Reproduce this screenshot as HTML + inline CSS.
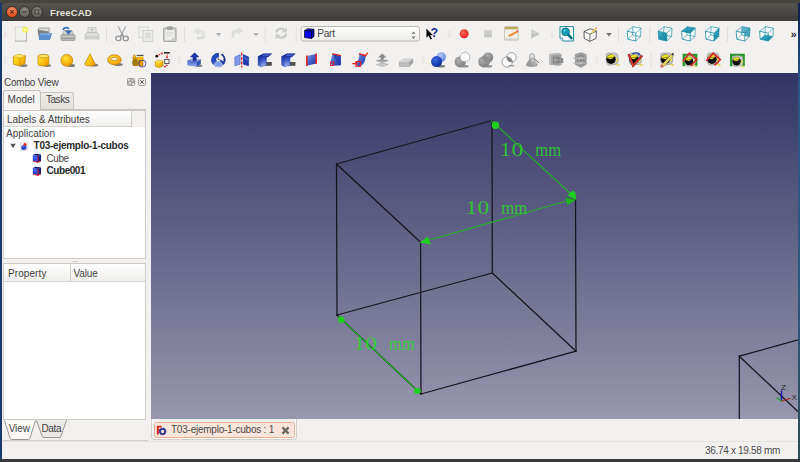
<!DOCTYPE html><html><head><meta charset="utf-8"><title>FreeCAD</title><style>
*{box-sizing:border-box;margin:0;padding:0}
html,body{width:800px;height:462px;overflow:hidden;background:#3e3d39}
body{position:relative;font-family:"Liberation Sans","DejaVu Sans",sans-serif;font-size:11px;color:#3c3c3c}
.abs{position:absolute}
#win{position:absolute;left:2px;top:12px;width:796px;height:447px;background:#f2f1f0}
#title{position:absolute;left:2px;top:3px;width:796px;height:18px;background:linear-gradient(#55544f,#3d3c38);border-radius:4px 4px 0 0}
#title .t{position:absolute;left:48px;top:2px;font-weight:bold;font-size:11.5px;color:#dfdbd2;letter-spacing:.2px}
.wb{position:absolute;top:3.1px;width:11.6px;height:11.6px;border-radius:50%;border:0.8px solid #33322e}
#view{position:absolute;left:151px;top:73px;width:647px;height:346px;background:linear-gradient(#333365,#9797ae)}
.t{white-space:nowrap;position:absolute}
.b{font-weight:bold}
</style></head><body><div class="abs" style="left:0;top:0;width:800px;height:3px;background:#45443f"></div><div class="abs" style="left:0;top:3px;width:2px;height:459px;background:#17396b"></div><div class="abs" style="left:798px;top:3px;width:2px;height:459px;background:linear-gradient(#0e1c4c,#2a5a8a 18%,#2f5578 70%,#2f4a52)"></div><div class="abs" style="left:0;top:459px;width:800px;height:3px;background:#3a3a3c"></div><div id="win"></div><div id="title"><div class="wb" style="left:4.3px;background:radial-gradient(circle at 50% 30%,#f79a72,#e2501f 70%)"></div><div class="wb" style="left:16.7px;background:radial-gradient(circle at 50% 30%,#8a8881,#65635d 75%)"></div><div class="wb" style="left:29.1px;background:radial-gradient(circle at 50% 30%,#8a8881,#65635d 75%)"></div><svg class="abs" style="left:0;top:0" width="50" height="18" viewBox="0 0 50 18"><path d="M8.3 7.1L11.7 10.5M11.7 7.1L8.3 10.5" stroke="#5e2a17" stroke-width="1.2"/><path d="M20.2 8.8H24.6" stroke="#46443f" stroke-width="1.3"/><rect x="32.8" y="6.8" width="4" height="4" fill="none" stroke="#46443f" stroke-width="1"/></svg><div class="t" style="left:48px;top:4.57px;font-size:9.6px;line-height:1;color:#e4e0d8;letter-spacing:0.103px;font-weight:bold;">FreeCAD</div></div><div id="view"></div><svg class="abs" style="left:0;top:0" width="800" height="462" viewBox="0 0 800 462"><defs><clipPath id="vc"><rect x="151" y="73" width="647" height="346"/></clipPath></defs><g clip-path="url(#vc)" stroke-linecap="round"><line x1="336.5" y1="164" x2="492" y2="120.5" stroke="#15151d" stroke-width="1.25"/><line x1="336.5" y1="164" x2="420.6" y2="242.3" stroke="#15151d" stroke-width="1.25"/><line x1="336.5" y1="164" x2="337" y2="315" stroke="#15151d" stroke-width="1.25"/><line x1="492" y1="120.5" x2="492.3" y2="273" stroke="#15151d" stroke-width="1.25"/><line x1="575.5" y1="197" x2="576" y2="351.2" stroke="#15151d" stroke-width="1.25"/><line x1="420.6" y1="242.3" x2="421" y2="394" stroke="#15151d" stroke-width="1.25"/><line x1="337" y1="315" x2="492.3" y2="273" stroke="#15151d" stroke-width="1.25"/><line x1="492.3" y1="273" x2="576" y2="351.2" stroke="#15151d" stroke-width="1.25"/><line x1="576" y1="351.2" x2="421" y2="394" stroke="#15151d" stroke-width="1.25"/><line x1="337" y1="315" x2="339" y2="317" stroke="#15151d" stroke-width="1.25"/><line x1="419.5" y1="392.6" x2="421" y2="394" stroke="#15151d" stroke-width="1.25"/><line x1="739.3" y1="356.2" x2="800" y2="339.4" stroke="#15151d" stroke-width="1.25"/><line x1="739.3" y1="356.2" x2="739.3" y2="420" stroke="#15151d" stroke-width="1.25"/><line x1="739.3" y1="356.2" x2="800" y2="413.5" stroke="#15151d" stroke-width="1.25"/><line x1="491.6" y1="120.8" x2="575.8" y2="198.5" stroke="#21b421" stroke-width="1.05"/><line x1="420.3" y1="242.6" x2="575.8" y2="198.5" stroke="#21b421" stroke-width="1.05"/><line x1="337" y1="315" x2="421" y2="394" stroke="#15151d" stroke-width="1.25"/><line x1="338.5" y1="316.4" x2="419.5" y2="392.6" stroke="#1fb41f" stroke-width="1.2"/><circle cx="495.5" cy="125.2" r="3.7" fill="#1fcf1f"/><circle cx="341.3" cy="319.8" r="3.2" fill="#1fcf1f"/><ellipse cx="417.4" cy="391" rx="3.4" ry="3" fill="#1fcf1f"/><polygon points="420,242.6 427.7,236.4 430.8,244.4" fill="#1fcf1f"/><polygon points="576.2,199.4 567.6,195.6 572.4,190.8 575.4,192.4" fill="#1fcf1f"/><polygon points="576.2,199.4 565.6,197.6 567.4,205.2" fill="#1cb81c"/><path d="M566 198L574 199.6" stroke="#158a15" stroke-width="0.8"/><text y="156.3" style="font-family:'Liberation Serif',serif;font-size:19px;fill:#2ad42a;fill-opacity:.88;stroke:none"><tspan x="499.6" textLength="23.6" lengthAdjust="spacingAndGlyphs">10</tspan> <tspan x="535.2" textLength="26" lengthAdjust="spacingAndGlyphs">mm</tspan></text><text y="213.9" style="font-family:'Liberation Serif',serif;font-size:19px;fill:#2ad42a;fill-opacity:.88;stroke:none"><tspan x="465.6" textLength="23.6" lengthAdjust="spacingAndGlyphs">10</tspan> <tspan x="501.20000000000005" textLength="26" lengthAdjust="spacingAndGlyphs">mm</tspan></text><text y="349.7" style="font-family:'Liberation Serif',serif;font-size:19px;fill:#2ad42a;fill-opacity:.88;stroke:none"><tspan x="353.4" textLength="23.6" lengthAdjust="spacingAndGlyphs">10</tspan> <tspan x="389.0" textLength="26" lengthAdjust="spacingAndGlyphs">mm</tspan></text><line x1="781.5" y1="401" x2="781.5" y2="391" stroke="#1818b0" stroke-width="1.5"/><line x1="781.5" y1="401" x2="790" y2="398.5" stroke="#b02020" stroke-width="1.3"/><line x1="781.5" y1="401" x2="777" y2="398" stroke="#20a020" stroke-width="1.3"/><text x="781" y="390" style="font-family:'Liberation Sans',sans-serif;font-size:8px;fill:#222">Z</text><text x="791.5" y="400" style="font-family:'Liberation Sans',sans-serif;font-size:8px;fill:#222">X</text></g></svg><svg class="abs" style="left:0;top:0" width="800" height="74" viewBox="0 0 800 74"><defs>
<linearGradient id="gy" x1="0" y1="0.2" x2="1" y2="0.8"><stop offset="0" stop-color="#ffe22e"/><stop offset=".55" stop-color="#fbc010"/><stop offset="1" stop-color="#f09800"/></linearGradient>
<radialGradient id="gys" cx=".38" cy=".32" r=".7"><stop offset="0" stop-color="#ffe43c"/><stop offset="1" stop-color="#f29a00"/></radialGradient>
<linearGradient id="gb" x1="0" y1="0" x2="1" y2="1"><stop offset="0" stop-color="#7896e8"/><stop offset="1" stop-color="#0f2fa8"/></linearGradient>
<linearGradient id="gb2" x1="0" y1="0" x2="0" y2="1"><stop offset="0" stop-color="#14278e"/><stop offset=".4" stop-color="#2f50c4"/><stop offset="1" stop-color="#a4b8f2"/></linearGradient>
<radialGradient id="gbs" cx=".38" cy=".32" r=".7"><stop offset="0" stop-color="#3b6ae0"/><stop offset="1" stop-color="#0a2a9a"/></radialGradient>
<radialGradient id="gbl" cx=".38" cy=".32" r=".7"><stop offset="0" stop-color="#b4c6f6"/><stop offset="1" stop-color="#6a88dc"/></radialGradient>
<radialGradient id="ggs" cx=".4" cy=".35" r=".7"><stop offset="0" stop-color="#b0b0b0"/><stop offset="1" stop-color="#7c7c7c"/></radialGradient>
<linearGradient id="gg" x1="0" y1="0" x2="0" y2="1"><stop offset="0" stop-color="#d8d8d8"/><stop offset="1" stop-color="#9a9a9a"/></linearGradient>
<linearGradient id="gt" x1="0" y1="0" x2="1" y2="1"><stop offset="0" stop-color="#3fb0c8"/><stop offset="1" stop-color="#137f9a"/></linearGradient>
<radialGradient id="gr" cx=".4" cy=".35" r=".7"><stop offset="0" stop-color="#ff6a5a"/><stop offset="1" stop-color="#e51818"/></radialGradient>
<linearGradient id="gcb" x1="0" y1="0" x2="0" y2="1"><stop offset="0" stop-color="#ffffff"/><stop offset="1" stop-color="#ecebe8"/></linearGradient>
</defs><rect x="4.1" y="31.700000000000003" width="2.8" height="0.8" fill="#d9d6d1"/><rect x="4.1" y="34.1" width="2.8" height="0.8" fill="#d9d6d1"/><rect x="4.1" y="36.5" width="2.8" height="0.8" fill="#d9d6d1"/><g transform="translate(13.0,26.2)"><rect x="2.2" y="0.8" width="11.2" height="14" fill="#f1f1f0" stroke="#d0d0cd" stroke-width="0.7"/><path d="M13.5 1.2V14.9H2" fill="none" stroke="#aeaeab" stroke-width="0.9"/><circle cx="12.2" cy="3.6" r="3" fill="#f4f05a"/><circle cx="12.2" cy="3.6" r="1.6" fill="#fcfa9a"/></g><g transform="translate(36.6,26.2)"><path d="M1.2 3.2L2 1.2H12.6L13 2.4V7H1.6Z" fill="#9a9a98"/><path d="M2.4 2.2H12V7H2.4Z" fill="#d9d9d7"/><path d="M1 3.5L2.6 13.6H13L11.8 5.2" fill="#7f7f7d"/><path d="M3.2 6.8H15.6L13.4 13.8H2.2Z" fill="#5b8fd0"/><path d="M3.6 7.4H14.8L14.4 8.6H3.3Z" fill="#8db4e2"/></g><g transform="translate(60.0,26.2)"><path d="M2.6 7.5L4.2 4.4H11.8L13.4 7.5V9H2.6Z" fill="#d0d0ce" stroke="#8e8e8c" stroke-width="0.6"/><rect x="1" y="8.6" width="14" height="5.6" rx="0.8" fill="#c4c4c2" stroke="#8a8a88" stroke-width="0.7"/><rect x="2" y="11.4" width="12" height="1.6" fill="#9c9c9a"/><path d="M3 3.8Q4 0.6 8 1.8L9 2.6" fill="none" stroke="#3a6fb6" stroke-width="1.8"/><path d="M4.8 4.2H12.2L8.5 8.6Z" fill="#3a6fb6"/></g><g transform="translate(84.0,26.2)"><rect x="4" y="1.6" width="8" height="5" fill="#e9e9e7" stroke="#b2b2b0" stroke-width="0.7"/><path d="M6.2 3.4H9.8M8 2.4V5.4" stroke="#b8b8b6" stroke-width="0.9"/><path d="M1 9L3 6.2H13L15 9V12.8H1Z" fill="#dededc" stroke="#b4b4b2" stroke-width="0.7"/><rect x="1.6" y="10" width="12.8" height="3.4" rx="0.6" fill="#cdcdcb"/><rect x="3" y="12.6" width="10" height="1.2" fill="#e4e4e2"/></g><rect x="106.0" y="26" width="1" height="16" fill="#e3e0dc"/><g transform="translate(114.0,26.2)"><path d="M4.6 0.8L9 9.4M11.4 0.8L7 9.4" stroke="#b4b4b4" stroke-width="1.6" stroke-linecap="round" fill="none"/><ellipse cx="4.3" cy="12.2" rx="2.6" ry="2.2" fill="none" stroke="#969696" stroke-width="1.3"/><ellipse cx="11.7" cy="12.2" rx="2.6" ry="2.2" fill="none" stroke="#969696" stroke-width="1.3"/><path d="M6.2 10.6L8 8.2L9.8 10.6" stroke="#8c8c8c" stroke-width="1.2" fill="none"/></g><g transform="translate(138.0,26.2)"><rect x="0.8" y="0.8" width="9.4" height="10.4" fill="#f0f0ee" stroke="#d2d2d0" stroke-width="0.8"/><rect x="5" y="4.2" width="9.8" height="11" fill="#ececea" stroke="#c8c8c6" stroke-width="0.8"/><rect x="7" y="6.6" width="5.8" height="5.4" fill="#dcdcda"/></g><g transform="translate(162.0,26.2)"><rect x="1.6" y="1.8" width="12.4" height="13.4" rx="0.8" fill="#d4d4d2" stroke="#9a9a98" stroke-width="0.9"/><rect x="3.4" y="3.8" width="8.8" height="9.8" fill="#efefed"/><rect x="5" y="0.6" width="5.6" height="2.8" rx="0.8" fill="#a2a2a0" stroke="#8a8a88" stroke-width="0.5"/><path d="M4.6 6.2H11M4.6 8H11M4.6 9.8H9" stroke="#cfcfcd" stroke-width="0.8"/><path d="M9 13.6L12.2 10.4V13.6Z" fill="#c9c9c7"/></g><rect x="184.0" y="26" width="1" height="16" fill="#e3e0dc"/><g transform="translate(191.6,26.2)"><path d="M1.6 5.2L7.2 1.2V3.6Q13.6 3.6 13.8 8.8Q13.8 13 9 13.6H5.4V11.6Q10 11.8 10 8.6Q10 6.8 7.2 6.8V9.2Z" fill="#e1e1df"/><path d="M5.2 11.4H12" stroke="#d6d6d4" stroke-width="1.6"/></g><path d="M215.79999999999998 33.0H221.4L218.6 36.599999999999994Z" fill="#b2b2b2"/><g transform="translate(229.2,25.6)"><path d="M14 5.2L8.6 1.2V3.6Q2.4 3.6 2.2 8.8Q2.4 11.6 4.4 13.2Q4.4 7 8.6 6.8V9.2Z" fill="#dededc"/></g><path d="M253.2 33.0H258.8L256 36.599999999999994Z" fill="#b2b2b2"/><rect x="264.8" y="26" width="1" height="16" fill="#e3e0dc"/><g transform="translate(273.2,25.2)"><path d="M2 7.4Q2.4 2.6 8 2.4Q10.6 2.4 11.8 3.8L13.6 2V7H8.6L10.2 5.4Q9.4 4.6 8 4.6Q4.8 4.8 4.4 7.4Z" fill="#c9c9c7"/><path d="M14 8.6Q13.6 13.4 8 13.6Q5.4 13.6 4.2 12.2L2.4 14V9H7.4L5.8 10.6Q6.6 11.4 8 11.4Q11.2 11.2 11.6 8.6Z" fill="#c9c9c7"/></g><rect x="295.8" y="26" width="1" height="16" fill="#e3e0dc"/><rect x="301" y="26.5" width="118.6" height="14.6" rx="2.6" fill="url(#gcb)" stroke="#b3afa8" stroke-width="0.9"/><path d="M304.6 30.6L307.4 28.8L314 29.2L311.6 31Z" fill="#1414f4" stroke="#05051c" stroke-width="0.8" stroke-linejoin="round"/><path d="M304.6 30.6L311.6 31V38.4L304.6 37.6Z" fill="#0505ee" stroke="#05051c" stroke-width="0.8" stroke-linejoin="round"/><path d="M311.6 31L314 29.2V36.4L311.6 38.4Z" fill="#0202b4" stroke="#05051c" stroke-width="0.8" stroke-linejoin="round"/><path d="M411.6 33.8L413.5 31.4L415.4 33.8Z" fill="#6e6e6c"/><path d="M411.6 36.6L413.5 39L415.4 36.6Z" fill="#6e6e6c"/><g transform="translate(424.2,26.2)"><path d="M2.2 2.4V11.6L4.4 9.6L6.2 13.4L7.8 12.6L6 9H8.8Z" fill="#0a0a0a"/><text x="6.4" y="10.8" style="font-family:'Liberation Sans',sans-serif;font-weight:bold;font-size:12.5px;fill:#1d2a9e">?</text></g><rect x="447.90000000000003" y="31.6" width="2.8" height="0.8" fill="#d9d6d1"/><rect x="447.90000000000003" y="34.0" width="2.8" height="0.8" fill="#d9d6d1"/><rect x="447.90000000000003" y="36.4" width="2.8" height="0.8" fill="#d9d6d1"/><g transform="translate(456.1,25.8)"><circle cx="8" cy="8" r="4.5" fill="url(#gr)"/></g><g transform="translate(480.0,25.8)"><rect x="4.1" y="4.2" width="7.8" height="7.6" fill="#d3d3d1"/><rect x="4.6" y="8" width="6.8" height="3.2" fill="#c3c3c1"/></g><g transform="translate(503.5,25.7)"><rect x="1" y="1" width="13.6" height="13.4" rx="0.8" fill="#f1f0ea" stroke="#bdbcb4" stroke-width="0.8"/><rect x="1.4" y="1.2" width="12.8" height="2.4" fill="#b9aa52"/><rect x="1.2" y="12.6" width="13.2" height="1.6" fill="#d0cfc8"/><path d="M5 9.4L13.2 5L14.2 6.8L6 11.2Z" fill="#ec8f2e"/><path d="M5 9.4L6 11.2L3.8 11.4Z" fill="#e8d8a8"/><path d="M13.2 5L14.2 4.4L15.2 6.2L14.2 6.8Z" fill="#d84a4a"/></g><g transform="translate(527.4,25.8)"><path d="M3.8 3.2L12.4 8L3.8 12.8Z" fill="#cfcfcd"/><path d="M3.8 8L12.4 8L3.8 12.8Z" fill="#c2c2c0"/></g><rect x="550.6" y="31.6" width="2.8" height="0.8" fill="#d9d6d1"/><rect x="550.6" y="34.0" width="2.8" height="0.8" fill="#d9d6d1"/><rect x="550.6" y="36.4" width="2.8" height="0.8" fill="#d9d6d1"/><g transform="translate(558.8,25.8)"><path d="M1.2 12.4V0.8H14.8V15.2H4Z" fill="#fafafa" stroke="#1f8ca4" stroke-width="1"/><path d="M1.2 12.4H4V15.2" fill="#e0eef2" stroke="#1f8ca4" stroke-width="0.8"/><circle cx="6.8" cy="6" r="3.9" fill="#1a9bb4" stroke="#0c6f86" stroke-width="0.9"/><path d="M9.6 9L12.6 12.4" stroke="#0c6f86" stroke-width="2.6" stroke-linecap="round"/><circle cx="5.8" cy="4.8" r="1.4" fill="#4fc0d6"/></g><g transform="translate(582.4,26.2)"><path d="M1.6 5.4L8 2.6L14 5L13.6 12.2L7.4 15.2L1.8 12.2Z" fill="#fbfbfb" stroke="#3a3a3a" stroke-width="0.8" stroke-linejoin="round"/><path d="M1.6 5.4L7.6 8L14 5M7.6 8L7.4 15.2" fill="none" stroke="#3a3a3a" stroke-width="0.7"/><path d="M8.6 6.4L12.8 1.8L14 2.8L9.8 7.4Z" fill="#e8c84a"/><path d="M12.8 1.8L13.6 0.8L14.8 1.8L14 2.8Z" fill="#e89a6a"/></g><path d="M606.2 33.0H611.8L609 36.599999999999994Z" fill="#6e6e6c"/><rect x="618.0" y="26" width="1" height="16" fill="#e3e0dc"/><g transform="translate(626.0,26.2)"><polygon points="1.2,5.0 9.8,7.0 9.8,14.8 1.8,13.0" fill="#fdfdfd" opacity=".95"/><polygon points="1.2,5.0 9.8,7.0 15.0,1.9 7.0,0.5" fill="#f4fafb" opacity="1"/><polygon points="9.8,7.0 15.0,1.9 14.5,10.3 9.8,14.8" fill="#f4fafb" opacity="1"/><polygon points="7.0,0.5 15.0,1.9 14.5,10.3 6.5,8.8" fill="none" stroke="#1b8aa2" stroke-width="0.8" stroke-linejoin="round" opacity=".8"/><line x1="1.2" y1="5.0" x2="7.0" y2="0.5" stroke="#1b8aa2" stroke-width="0.7" opacity=".85"/><line x1="9.8" y1="7.0" x2="15.0" y2="1.9" stroke="#1b8aa2" stroke-width="0.7" opacity=".85"/><line x1="9.8" y1="14.8" x2="14.5" y2="10.3" stroke="#1b8aa2" stroke-width="0.7" opacity=".85"/><line x1="1.8" y1="13.0" x2="6.5" y2="8.8" stroke="#1b8aa2" stroke-width="0.7" opacity=".85"/><polygon points="1.2,5.0 9.8,7.0 9.8,14.8 1.8,13.0" fill="none" stroke="#1b8aa2" stroke-width="0.8" stroke-linejoin="round"/></g><rect x="649.2" y="26" width="1" height="16" fill="#e3e0dc"/><g transform="translate(657.0,26.2)"><polygon points="1.2,5.0 9.8,7.0 9.8,14.8 1.8,13.0" fill="#fdfdfd" opacity=".95"/><polygon points="1.2,5.0 9.8,7.0 15.0,1.9 7.0,0.5" fill="#f4fafb" opacity="1"/><polygon points="9.8,7.0 15.0,1.9 14.5,10.3 9.8,14.8" fill="#f4fafb" opacity="1"/><polygon points="1.2,5.0 9.8,7.0 9.8,14.8 1.8,13.0" fill="url(#gt)"/><polygon points="7.0,0.5 15.0,1.9 14.5,10.3 6.5,8.8" fill="none" stroke="#1b8aa2" stroke-width="0.8" stroke-linejoin="round" opacity=".8"/><line x1="1.2" y1="5.0" x2="7.0" y2="0.5" stroke="#1b8aa2" stroke-width="0.7" opacity=".85"/><line x1="9.8" y1="7.0" x2="15.0" y2="1.9" stroke="#1b8aa2" stroke-width="0.7" opacity=".85"/><line x1="9.8" y1="14.8" x2="14.5" y2="10.3" stroke="#1b8aa2" stroke-width="0.7" opacity=".85"/><line x1="1.8" y1="13.0" x2="6.5" y2="8.8" stroke="#1b8aa2" stroke-width="0.7" opacity=".85"/><polygon points="1.2,5.0 9.8,7.0 9.8,14.8 1.8,13.0" fill="none" stroke="#1b8aa2" stroke-width="0.8" stroke-linejoin="round"/></g><g transform="translate(680.4,26.2)"><polygon points="1.2,5.0 9.8,7.0 9.8,14.8 1.8,13.0" fill="#fdfdfd" opacity=".95"/><polygon points="1.2,5.0 9.8,7.0 15.0,1.9 7.0,0.5" fill="#f4fafb" opacity="1"/><polygon points="9.8,7.0 15.0,1.9 14.5,10.3 9.8,14.8" fill="#f4fafb" opacity="1"/><polygon points="1.2,5.0 9.8,7.0 15.0,1.9 7.0,0.5" fill="url(#gt)"/><polygon points="7.0,0.5 15.0,1.9 14.5,10.3 6.5,8.8" fill="none" stroke="#1b8aa2" stroke-width="0.8" stroke-linejoin="round" opacity=".8"/><line x1="1.2" y1="5.0" x2="7.0" y2="0.5" stroke="#1b8aa2" stroke-width="0.7" opacity=".85"/><line x1="9.8" y1="7.0" x2="15.0" y2="1.9" stroke="#1b8aa2" stroke-width="0.7" opacity=".85"/><line x1="9.8" y1="14.8" x2="14.5" y2="10.3" stroke="#1b8aa2" stroke-width="0.7" opacity=".85"/><line x1="1.8" y1="13.0" x2="6.5" y2="8.8" stroke="#1b8aa2" stroke-width="0.7" opacity=".85"/><polygon points="1.2,5.0 9.8,7.0 9.8,14.8 1.8,13.0" fill="none" stroke="#1b8aa2" stroke-width="0.8" stroke-linejoin="round"/></g><g transform="translate(704.2,26.2)"><polygon points="1.2,5.0 9.8,7.0 9.8,14.8 1.8,13.0" fill="#fdfdfd" opacity=".95"/><polygon points="1.2,5.0 9.8,7.0 15.0,1.9 7.0,0.5" fill="#f4fafb" opacity="1"/><polygon points="9.8,7.0 15.0,1.9 14.5,10.3 9.8,14.8" fill="#f4fafb" opacity="1"/><polygon points="9.8,7.0 15.0,1.9 14.5,10.3 9.8,14.8" fill="url(#gt)"/><polygon points="7.0,0.5 15.0,1.9 14.5,10.3 6.5,8.8" fill="none" stroke="#1b8aa2" stroke-width="0.8" stroke-linejoin="round" opacity=".8"/><line x1="1.2" y1="5.0" x2="7.0" y2="0.5" stroke="#1b8aa2" stroke-width="0.7" opacity=".85"/><line x1="9.8" y1="7.0" x2="15.0" y2="1.9" stroke="#1b8aa2" stroke-width="0.7" opacity=".85"/><line x1="9.8" y1="14.8" x2="14.5" y2="10.3" stroke="#1b8aa2" stroke-width="0.7" opacity=".85"/><line x1="1.8" y1="13.0" x2="6.5" y2="8.8" stroke="#1b8aa2" stroke-width="0.7" opacity=".85"/><polygon points="1.2,5.0 9.8,7.0 9.8,14.8 1.8,13.0" fill="none" stroke="#1b8aa2" stroke-width="0.8" stroke-linejoin="round"/></g><rect x="727.0" y="26" width="1" height="16" fill="#e3e0dc"/><g transform="translate(735.0,26.2)"><polygon points="7.0,0.5 15.0,1.9 14.5,10.3 6.5,8.8" fill="url(#gt)"/><polygon points="1.2,5.0 9.8,7.0 9.8,14.8 1.8,13.0" fill="#fdfdfd" opacity=".95"/><polygon points="1.2,5.0 9.8,7.0 15.0,1.9 7.0,0.5" fill="#f4fafb" opacity="0.2"/><polygon points="9.8,7.0 15.0,1.9 14.5,10.3 9.8,14.8" fill="#f4fafb" opacity="0.2"/><polygon points="7.0,0.5 15.0,1.9 14.5,10.3 6.5,8.8" fill="none" stroke="#1b8aa2" stroke-width="0.8" stroke-linejoin="round" opacity=".8"/><line x1="1.2" y1="5.0" x2="7.0" y2="0.5" stroke="#1b8aa2" stroke-width="0.7" opacity=".85"/><line x1="9.8" y1="7.0" x2="15.0" y2="1.9" stroke="#1b8aa2" stroke-width="0.7" opacity=".85"/><line x1="9.8" y1="14.8" x2="14.5" y2="10.3" stroke="#1b8aa2" stroke-width="0.7" opacity=".85"/><line x1="1.8" y1="13.0" x2="6.5" y2="8.8" stroke="#1b8aa2" stroke-width="0.7" opacity=".85"/><polygon points="1.2,5.0 9.8,7.0 9.8,14.8 1.8,13.0" fill="none" stroke="#1b8aa2" stroke-width="0.8" stroke-linejoin="round"/></g><g transform="translate(758.4,26.2)"><polygon points="1.2,5.0 9.8,7.0 9.8,14.8 1.8,13.0" fill="#fdfdfd" opacity=".95"/><polygon points="1.2,5.0 9.8,7.0 15.0,1.9 7.0,0.5" fill="#f4fafb" opacity="1"/><polygon points="9.8,7.0 15.0,1.9 14.5,10.3 9.8,14.8" fill="#f4fafb" opacity="1"/><polygon points="1.8,13.0 9.8,14.8 14.5,10.3 6.5,8.8" fill="url(#gt)"/><polygon points="7.0,0.5 15.0,1.9 14.5,10.3 6.5,8.8" fill="none" stroke="#1b8aa2" stroke-width="0.8" stroke-linejoin="round" opacity=".8"/><line x1="1.2" y1="5.0" x2="7.0" y2="0.5" stroke="#1b8aa2" stroke-width="0.7" opacity=".85"/><line x1="9.8" y1="7.0" x2="15.0" y2="1.9" stroke="#1b8aa2" stroke-width="0.7" opacity=".85"/><line x1="9.8" y1="14.8" x2="14.5" y2="10.3" stroke="#1b8aa2" stroke-width="0.7" opacity=".85"/><line x1="1.8" y1="13.0" x2="6.5" y2="8.8" stroke="#1b8aa2" stroke-width="0.7" opacity=".85"/><polygon points="1.2,5.0 9.8,7.0 9.8,14.8 1.8,13.0" fill="none" stroke="#1b8aa2" stroke-width="0.8" stroke-linejoin="round"/></g><text x="790.8" y="37.6" style="font-family:'Liberation Sans',sans-serif;font-weight:bold;font-size:10.5px;fill:#1c1c1c">»</text><rect x="4.1" y="57.6" width="2.8" height="0.8" fill="#d9d6d1"/><rect x="4.1" y="60.0" width="2.8" height="0.8" fill="#d9d6d1"/><rect x="4.1" y="62.4" width="2.8" height="0.8" fill="#d9d6d1"/><g transform="translate(12.0,52.0)"><ellipse cx="11.5" cy="13.6" rx="4" ry="1.4" fill="#555" opacity=".75"/><path d="M1.2 4.6L6.4 2.4L13.4 3.8L13 11.6L7.8 14L1.6 12.2Z" fill="url(#gy)" stroke="#b97c00" stroke-width="0.7" stroke-linejoin="round"/><path d="M1.2 4.6L7.8 6L13.4 3.8M7.8 6V14" fill="none" stroke="#c98a00" stroke-width="0.7"/><path d="M1.2 4.6L6.4 2.4L13.4 3.8L7.8 6Z" fill="#ffe763"/></g><g transform="translate(35.6,52.0)"><ellipse cx="11.5" cy="13.6" rx="4" ry="1.4" fill="#555" opacity=".75"/><path d="M2.4 4.2V12Q2.4 14 7.8 14Q13.2 14 13.2 12V4.2Z" fill="url(#gy)" stroke="#b97c00" stroke-width="0.7" stroke-linejoin="round"/><ellipse cx="7.8" cy="4.2" rx="5.4" ry="1.8" fill="#ffe763" stroke="#b97c00" stroke-width="0.7" stroke-linejoin="round"/></g><g transform="translate(59.4,52.0)"><ellipse cx="11.6" cy="13.4" rx="4" ry="1.6" fill="#555" opacity=".75"/><circle cx="7.4" cy="8.4" r="5.9" fill="url(#gys)" stroke="#b97c00" stroke-width="0.7" stroke-linejoin="round"/></g><g transform="translate(82.4,52.0)"><ellipse cx="11.8" cy="13" rx="4" ry="1.5" fill="#555" opacity=".75"/><path d="M7.6 1.8L2.2 12.2Q2.6 14 7.6 14Q12.6 14 13 12.2Z" fill="url(#gy)" stroke="#b97c00" stroke-width="0.7" stroke-linejoin="round"/></g><g transform="translate(107.0,52.0)"><ellipse cx="11.4" cy="12.6" rx="4.4" ry="1.5" fill="#555" opacity=".75"/><ellipse cx="7.4" cy="7.8" rx="6.8" ry="5" fill="url(#gys)" stroke="#b97c00" stroke-width="0.7" stroke-linejoin="round"/><ellipse cx="7.2" cy="7" rx="3.6" ry="1.7" fill="#f3ecd0" stroke="#b97c00" stroke-width="0.7"/></g><g transform="translate(131.0,52.0)"><path d="M3.4 2.6L1.6 6H5.4Z" fill="#ffd630" stroke="#b97c00" stroke-width="0.7" stroke-linejoin="round"/><rect x="2.4" y="6" width="8.4" height="7.6" fill="#f2a800" stroke="#b97c00" stroke-width="0.7" stroke-linejoin="round"/><circle cx="4.4" cy="10.4" r="3.4" fill="#8a6a10" opacity=".75"/><path d="M5.6 3.4H12.6" stroke="#555" stroke-width="1.2"/><rect x="6.6" y="4.6" width="6" height="4" fill="#f6b400"/><rect x="8.4" y="8.6" width="3.6" height="5.4" fill="#f0a000" stroke="#8a6a10" stroke-width="0.5"/><circle cx="11.4" cy="11.6" r="3.5" fill="none" stroke="#3a3a9a" stroke-width="0.8"/></g><g transform="translate(154.4,52.0)"><path d="M1 9.6L4.4 8.4L8.6 9.2V14L4.8 15.4L1 14.2Z" fill="url(#gy)" stroke="#b97c00" stroke-width="0.7" stroke-linejoin="round"/><path d="M1 9.6L4.4 8.4L8.6 9.2L4.8 10.4Z" fill="#ffe763"/><circle cx="2.4" cy="4.2" r="1.4" fill="#111"/><path d="M9.6 0.8H15.4" stroke="#222" stroke-width="1.5"/><rect x="10.4" y="7.4" width="4.2" height="4.2" fill="#fff" stroke="#444" stroke-width="0.9"/><path d="M4.2 3L7.8 1.4M12.6 2.4V6M13 13L10.2 14.6" stroke="#e01818" stroke-width="1.1" stroke-dasharray="1.4 0.8"/><path d="M6.8 0.6L9 1L7.4 2.6ZM11.4 4.6H13.8L12.6 6.6ZM11 13.4L9.2 15L11.6 15.4Z" fill="#e01818"/></g><rect x="178.0" y="57.6" width="2.8" height="0.8" fill="#d9d6d1"/><rect x="178.0" y="60.0" width="2.8" height="0.8" fill="#d9d6d1"/><rect x="178.0" y="62.4" width="2.8" height="0.8" fill="#d9d6d1"/><g transform="translate(187.0,52.0)"><ellipse cx="12" cy="13.8" rx="3.4" ry="1.3" fill="#555" opacity=".7"/><path d="M0.8 8.8L5 7.2L13.8 7.8L10 9.6Z" fill="#a9bdf0" stroke="#3350b4" stroke-width="0.4"/><path d="M0.8 8.8L10 9.6V14.4L0.8 13Z" fill="url(#gb2)" stroke="#2a47a8" stroke-width="0.4"/><path d="M0.8 8.8L10 9.6V14.4L0.8 13Z" fill="#8aa2ea" opacity=".55"/><path d="M10 9.6L13.8 7.8V12L10 14.4Z" fill="#3654ba"/><path d="M7.6 0.8L3.4 5H6V8.8H9.2V5H11.8Z" fill="#1a35a8" stroke="#0c1f78" stroke-width="0.5"/></g><g transform="translate(210.4,52.0)"><path d="M8 1.2A6.8 6.8 0 1 0 14.6 9.6L8 8Z" fill="url(#gb)" stroke="#13298e" stroke-width="0.7"/><path d="M8 1.2A6.8 6.8 0 0 0 1.6 10.4L8 8Z" fill="#2146b8"/><path d="M8 8L3.4 13A6.8 6.8 0 0 0 12.6 13Z" fill="#7f9ce8" stroke="#f4f4f4" stroke-width="0.6"/><circle cx="7.8" cy="7.6" r="2" fill="#f2f2f2"/><path d="M7.8 7.6H9.8M7.8 7.6V6" stroke="#333" stroke-width="0.7"/><path d="M11 2.2Q14.4 4 14.2 8" fill="none" stroke="#13298e" stroke-width="1.6"/><path d="M12.8 7.4L15.6 7.6L14.2 10Z" fill="#13298e"/></g><g transform="translate(233.6,52.0)"><path d="M1.2 5L6.6 2.6V12.2L1.2 13.8Z" fill="#7f98e6" stroke="#3a57b8" stroke-width="0.5"/><path d="M9.6 2.6L15 5V13.8L9.6 12.2Z" fill="#1c3cb0" stroke="#13298e" stroke-width="0.5"/><path d="M10.4 4L14.2 5.8V9L10.4 7.6Z" fill="#4a68cc" opacity=".7"/><path d="M8.1 0.6V15.4" stroke="#ee1c1c" stroke-width="1.3" stroke-dasharray="3 1.4"/></g><g transform="translate(257.0,52.0)"><path d="M7.4 10H14.8V13.8H7.4Z" fill="#3c3c3c" opacity=".9"/><path d="M1 4.6L6.4 1.8H14.6L11.2 4.8Q9.6 5 9.4 6.6V13L4.2 14.8L1 13.2Z" fill="url(#gb2)" stroke="#2a47a8" stroke-width="0.4"/><path d="M1 4.6L6.4 1.8H14.6L11.2 4.8H3.8Z" fill="#14278e"/><path d="M6.6 2.2H13.4L11 4.2H4.6Z" fill="#4c6ad0" opacity=".8"/><path d="M1 4.6L4.2 6V14.8L1 13.2Z" fill="#1a2f9c" opacity=".45"/></g><g transform="translate(280.6,52.0)"><path d="M7.4 10H14.8V13.8H7.4Z" fill="#3c3c3c" opacity=".9"/><path d="M1 4.6L6.4 1.8H14.6L11.2 4.8Q9.6 5 9.4 6.6V13L4.2 14.8L1 13.2Z" fill="url(#gb2)" stroke="#2a47a8" stroke-width="0.4"/><path d="M1 4.6L6.4 1.8H14.6L11.2 4.8H3.8Z" fill="#14278e"/><path d="M6.6 2.2H13.4L11 4.2H4.6Z" fill="#4c6ad0" opacity=".8"/><path d="M1 4.6L4.2 6V14.8L1 13.2Z" fill="#1a2f9c" opacity=".45"/></g><g transform="translate(304.4,52.0)"><path d="M2.4 4L11.6 2V11.6L2.4 13.8Z" fill="url(#gb)"/><path d="M2.4 3.6V14M11.8 1.4V12" stroke="#ee1c1c" stroke-width="1.5"/></g><g transform="translate(328.0,52.0)"><path d="M4.4 2L12.8 3.6V13.2L4.2 13.8L2.4 10.2Z" fill="url(#gb)"/><path d="M4.4 2L12.8 3.6L12.8 13.2L8 9Z" fill="#1f3aa8" opacity=".7"/><path d="M4.2 1.8L13 3.6" stroke="#ee1c1c" stroke-width="1.3"/><rect x="2.6" y="10" width="3.2" height="3.4" fill="none" stroke="#ee1c1c" stroke-width="1"/></g><g transform="translate(352.0,52.0)"><path d="M7.4 2L13.4 3.8Q13.6 12 6.6 15L3.6 11Q8 8.4 7.4 2Z" fill="url(#gb)" stroke="#2a47a8" stroke-width="0.4"/><path d="M7 1.6L13.8 3.8" stroke="#ee1c1c" stroke-width="1.5"/><path d="M13.2 4.4L15.8 0.6" stroke="#ee1c1c" stroke-width="1.3"/><path d="M0.4 11.6H5.4M4 9.6H8.4V14.2H4Z" stroke="#ee1c1c" stroke-width="1.1" fill="none"/><path d="M3 10.2L5.4 11.6L3 13Z" fill="#ee1c1c"/></g><g transform="translate(375.0,52.0)"><path d="M7.2 1.4L3 5.4H5.8V7.6H8.8V5.4H11.6Z" fill="#8a8a8a"/><path d="M1.4 8.8L7.2 7L13.4 8.8L7.4 10.6Z" fill="#a6a6a6" stroke="#8a8a8a" stroke-width="0.4"/><path d="M1.4 12.6L7.2 10.8L13.4 12.6L7.4 14.6Z" fill="#c9c9c9" stroke="#9a9a9a" stroke-width="0.5"/></g><g transform="translate(398.4,52.0)"><path d="M1 10L5.4 7H14.4V11L10.6 14.6H1Z" fill="#bdbdbd" stroke="#9a9a9a" stroke-width="0.5"/><path d="M1 10L5.4 7H14.4L10.6 10Z" fill="#d6d6d6"/><path d="M10.6 10V14.6L14.4 11V7Z" fill="#a2a2a2"/></g><rect x="421.90000000000003" y="57.6" width="2.8" height="0.8" fill="#d9d6d1"/><rect x="421.90000000000003" y="60.0" width="2.8" height="0.8" fill="#d9d6d1"/><rect x="421.90000000000003" y="62.4" width="2.8" height="0.8" fill="#d9d6d1"/><g transform="translate(430.6,52.0)"><ellipse cx="10.6" cy="14.2" rx="4" ry="1.3" fill="#444" opacity=".7"/><circle cx="10.6" cy="5" r="4.8" fill="url(#gbl)"/><circle cx="6" cy="9.6" r="5.5" fill="url(#gbs)"/></g><g transform="translate(454.2,52.0)"><ellipse cx="10.6" cy="14.2" rx="4" ry="1.3" fill="#555" opacity=".6"/><circle cx="6" cy="9.8" r="5.6" fill="url(#ggs)"/><circle cx="10.8" cy="5" r="4.8" fill="#fff" stroke="#9a9a9a" stroke-width="0.7"/></g><g transform="translate(477.8,52.0)"><ellipse cx="10.6" cy="14.2" rx="4" ry="1.3" fill="#555" opacity=".6"/><circle cx="10.4" cy="5.4" r="5" fill="url(#ggs)"/><circle cx="6" cy="9.8" r="5.6" fill="url(#ggs)"/><path d="M3.6 5.6L7 2.6L13.6 9L10 13.4Z" fill="#8e8e8e"/></g><g transform="translate(501.4,52.0)"><circle cx="10" cy="5.4" r="4.8" fill="#fff" stroke="#8a8a8a" stroke-width="0.8"/><circle cx="5.8" cy="10" r="5.2" fill="#fff" stroke="#8a8a8a" stroke-width="0.8"/><path d="M5.4 5.6Q10 5.4 10.4 10Q5.8 10.2 5.4 5.6Z" fill="#7e7e7e" stroke="#666" stroke-width="0.5"/><path d="M7 13.8H13" stroke="#8a8a8a" stroke-width="1"/></g><g transform="translate(524.6,52.0)"><path d="M6 4.4L1.4 13Q2 14.8 7.4 14.8Q12.6 14.8 13.2 13L9.4 4.4Z" fill="url(#gg)"/><path d="M6 4.4L1.4 13Q2 14.8 7.4 14.8Z" fill="#8c8c8c" opacity=".6"/><circle cx="7.4" cy="4.2" r="2.6" fill="#dcdcdc" stroke="#9a9a9a" stroke-width="0.7"/><path d="M9.4 6.4L14.6 11" stroke="#7a7a7a" stroke-width="1"/></g><g transform="translate(548.2,52.0)"><path d="M1.4 2.2L11 1.2V13.6L1.4 12.4Z" fill="#c4c4c4" stroke="#9e9e9e" stroke-width="0.6"/><path d="M3.4 3.4L13 2.6V12.8L3.4 12Z" fill="#a8a8a8" stroke="#8c8c8c" stroke-width="0.5"/><rect x="5" y="5" width="6" height="6" fill="#8c8c8c" stroke="#6e6e6e" stroke-width="0.5"/><path d="M7 5V11M5 8H11" stroke="#b8b8b8" stroke-width="0.6"/><path d="M12.4 6H15V11H12.4Z" fill="#8a8a8a"/></g><g transform="translate(571.8,52.0)"><path d="M3.6 2.4L9 0.8L14.4 2.4V12.4L9 15.4L3.6 12.4Z" fill="#9e9e9e" stroke="#7e7e7e" stroke-width="0.5"/><path d="M5.4 4.2L9 3L12.6 4.2V11.6L9 13.4L5.4 11.6Z" fill="#7c7c7c"/><path d="M1 6L9 4.6L15.6 6L8 7.8ZM1 11L9 9.6L15.6 11L8 12.8Z" fill="#c8c8c8" opacity=".8" stroke="#9a9a9a" stroke-width="0.4"/><path d="M7 5V12M10.8 5V12" stroke="#bdbdbd" stroke-width="0.6"/></g><rect x="595.6" y="57.6" width="2.8" height="0.8" fill="#d9d6d1"/><rect x="595.6" y="60.0" width="2.8" height="0.8" fill="#d9d6d1"/><rect x="595.6" y="62.4" width="2.8" height="0.8" fill="#d9d6d1"/><g transform="translate(604.4,51.6)"><path d="M8 11.4L15 13.8" stroke="#e0d25a" stroke-width="1.7"/><path d="M12.6 11.4V14.6" stroke="#f4f08a" stroke-width="0.8"/><path d="M2 3.2Q2 1.4 4 1.4H10.4Q12.6 1.4 13.4 3.4L14 9Q14 12 11.4 12.6L5.4 13.6Q2.4 13.4 2 10.4Z" fill="#c6c6c4" stroke="#8e8e8c" stroke-width="0.6"/><circle cx="6.6" cy="7.6" r="4.7" fill="#0a0a0a"/><path d="M2.2 6.4A4.7 4.7 0 0 1 10.6 5L6.6 7.6Z" fill="#f2e822"/><path d="M2.1 6.6L10.8 5.2" stroke="#0a0a0a" stroke-width="0.4"/><rect x="11.6" y="6.4" width="1.6" height="3.4" fill="#e8de3a"/></g><g transform="translate(627.4,51.6)"><path d="M8 11.4L15 13.8" stroke="#e0d25a" stroke-width="1.7"/><path d="M12.6 11.4V14.6" stroke="#f4f08a" stroke-width="0.8"/><path d="M2 3.2Q2 1.4 4 1.4H10.4Q12.6 1.4 13.4 3.4L14 9Q14 12 11.4 12.6L5.4 13.6Q2.4 13.4 2 10.4Z" fill="#c6c6c4" stroke="#8e8e8c" stroke-width="0.6"/><circle cx="6.6" cy="7.6" r="4.7" fill="#0a0a0a"/><path d="M2.2 6.4A4.7 4.7 0 0 1 10.6 5L6.6 7.6Z" fill="#f2e822"/><path d="M2.1 6.6L10.8 5.2" stroke="#0a0a0a" stroke-width="0.4"/><rect x="11.6" y="6.4" width="1.6" height="3.4" fill="#e8de3a"/><path d="M1.2 2.6L5.7 14L14.8 4" fill="none" stroke="#7a1a14" stroke-width="2.3" stroke-linejoin="miter"/><path d="M1.2 2.6L5.7 14L14.8 4" fill="none" stroke="#e0402e" stroke-width="1.4" stroke-linejoin="miter"/><path d="M5 2.2Q9 0.2 12 2.6" fill="none" stroke="#2a4aa8" stroke-width="1.4"/><path d="M11 1L13.4 3.4L10.4 3.8Z" fill="#2a4aa8"/></g><rect x="650.5" y="52" width="1" height="16" fill="#e3e0dc"/><g transform="translate(658.8,51.6)"><path d="M8 11.4L15 13.8" stroke="#e0d25a" stroke-width="1.7"/><path d="M12.6 11.4V14.6" stroke="#f4f08a" stroke-width="0.8"/><path d="M2 3.2Q2 1.4 4 1.4H10.4Q12.6 1.4 13.4 3.4L14 9Q14 12 11.4 12.6L5.4 13.6Q2.4 13.4 2 10.4Z" fill="#c6c6c4" stroke="#8e8e8c" stroke-width="0.6"/><circle cx="6.6" cy="7.6" r="4.7" fill="#0a0a0a"/><path d="M2.2 6.4A4.7 4.7 0 0 1 10.6 5L6.6 7.6Z" fill="#f2e822"/><path d="M2.1 6.6L10.8 5.2" stroke="#0a0a0a" stroke-width="0.4"/><rect x="11.6" y="6.4" width="1.6" height="3.4" fill="#e8de3a"/><path d="M3 13.2L12.6 2.6L14.6 4.4L5 15Z" fill="#ecd86a" stroke="#8a7a2a" stroke-width="0.5"/><path d="M12.6 2.6L14.8 0.8L14.6 4.4Z" fill="#222"/><path d="M3 13.2L5 15L2.6 15.6Z" fill="#d86a6a"/><circle cx="3" cy="14.6" r="1.4" fill="#e08a8a" stroke="#a84a4a" stroke-width="0.4"/></g><g transform="translate(682.0,51.6)"><path d="M0.6 2.2H15.4V14.6H13V4.6H3V14.6H0.6Z" fill="#2a962a"/><g transform="translate(1.2,2.8) scale(.88)"><path d="M8 11.4L15 13.8" stroke="#e0d25a" stroke-width="1.7"/><path d="M12.6 11.4V14.6" stroke="#f4f08a" stroke-width="0.8"/><path d="M2 3.2Q2 1.4 4 1.4H10.4Q12.6 1.4 13.4 3.4L14 9Q14 12 11.4 12.6L5.4 13.6Q2.4 13.4 2 10.4Z" fill="#c6c6c4" stroke="#8e8e8c" stroke-width="0.6"/><circle cx="6.6" cy="7.6" r="4.7" fill="#0a0a0a"/><path d="M2.2 6.4A4.7 4.7 0 0 1 10.6 5L6.6 7.6Z" fill="#f2e822"/><path d="M2.1 6.6L10.8 5.2" stroke="#0a0a0a" stroke-width="0.4"/><rect x="11.6" y="6.4" width="1.6" height="3.4" fill="#e8de3a"/></g><path d="M0.9 9.6L7.5 1.7L14.7 7.9L8.8 14.2" fill="none" stroke="#d43030" stroke-width="1.7"/></g><g transform="translate(705.4,51.6)"><path d="M8 11.4L15 13.8" stroke="#e0d25a" stroke-width="1.7"/><path d="M12.6 11.4V14.6" stroke="#f4f08a" stroke-width="0.8"/><path d="M2 3.2Q2 1.4 4 1.4H10.4Q12.6 1.4 13.4 3.4L14 9Q14 12 11.4 12.6L5.4 13.6Q2.4 13.4 2 10.4Z" fill="#c6c6c4" stroke="#8e8e8c" stroke-width="0.6"/><circle cx="6.6" cy="7.6" r="4.7" fill="#0a0a0a"/><path d="M2.2 6.4A4.7 4.7 0 0 1 10.6 5L6.6 7.6Z" fill="#f2e822"/><path d="M2.1 6.6L10.8 5.2" stroke="#0a0a0a" stroke-width="0.4"/><rect x="11.6" y="6.4" width="1.6" height="3.4" fill="#e8de3a"/><path d="M0.9 9.2L7.8 1.7L14.9 7.9L9 13.8" fill="none" stroke="#d43030" stroke-width="1.7"/></g><g transform="translate(729.6,51.8)"><path d="M0.4 2H15.2V14.4H12.8V4.4H2.8V14.4H0.4Z" fill="#2a962a"/><g transform="translate(1.2,2.8) scale(.88)"><path d="M8 11.4L15 13.8" stroke="#e0d25a" stroke-width="1.7"/><path d="M12.6 11.4V14.6" stroke="#f4f08a" stroke-width="0.8"/><path d="M2 3.2Q2 1.4 4 1.4H10.4Q12.6 1.4 13.4 3.4L14 9Q14 12 11.4 12.6L5.4 13.6Q2.4 13.4 2 10.4Z" fill="#c6c6c4" stroke="#8e8e8c" stroke-width="0.6"/><circle cx="6.6" cy="7.6" r="4.7" fill="#0a0a0a"/><path d="M2.2 6.4A4.7 4.7 0 0 1 10.6 5L6.6 7.6Z" fill="#f2e822"/><path d="M2.1 6.6L10.8 5.2" stroke="#0a0a0a" stroke-width="0.4"/><rect x="11.6" y="6.4" width="1.6" height="3.4" fill="#e8de3a"/></g></g></svg><div class="t" style="left:317.3px;top:28.87px;font-size:10.2px;line-height:1;color:#484848;letter-spacing:-0.327px;">Part</div><div class="t" style="left:4px;top:77.53px;font-size:10px;line-height:1;color:#424242;letter-spacing:-0.211px;">Combo View</div><svg class="abs" style="left:127px;top:78px" width="8" height="8" viewBox="0 0 8 8"><rect x="0.5" y="0.5" width="7" height="7" rx="1" fill="#ebe9e6" stroke="#a29f99" stroke-width="1"/><rect x="3.2" y="1.8" width="3" height="3" fill="none" stroke="#777" stroke-width="0.7"/><rect x="1.8" y="3.2" width="3" height="3" fill="#ebe9e6" stroke="#777" stroke-width="0.7"/></svg><svg class="abs" style="left:138px;top:78px" width="8" height="8" viewBox="0 0 8 8"><rect x="0.5" y="0.5" width="7" height="7" rx="1" fill="#ebe9e6" stroke="#a29f99" stroke-width="1"/><path d="M2.2 2.2L5.8 5.8M5.8 2.2L2.2 5.8" stroke="#5a5a5a" stroke-width="1"/></svg><div class="abs" style="left:40px;top:92px;width:34px;height:17px;background:linear-gradient(#eeece9,#e3e0dc);border:1px solid #c9c5bf;border-bottom:none;border-radius:3px 3px 0 0"></div><div class="abs" style="left:3px;top:109px;width:143px;height:1px;background:#c4c0b9"></div><div class="abs" style="left:3px;top:90px;width:38px;height:20px;background:#f6f5f3;border:1px solid #c4c0b9;border-bottom:none;border-radius:3px 3px 0 0"></div><div class="t" style="left:7.6px;top:95.13px;font-size:10px;line-height:1;color:#424242;letter-spacing:-0.008px;">Model</div><div class="t" style="left:46px;top:95.13px;font-size:10px;line-height:1;color:#424242;letter-spacing:-0.472px;">Tasks</div><div class="abs" style="left:3px;top:110px;width:143px;height:149px;background:#fff;border:1px solid #cdc9c3;"></div><div class="abs" style="left:4px;top:111px;width:128px;height:16px;background:linear-gradient(#fefefe,#f0efed);border-right:1px solid #cfccc6;border-bottom:1px solid #d6d3ce"></div><div class="abs" style="left:132px;top:111px;width:13px;height:16px;background:#f2f1f0;"></div><div class="t" style="left:7px;top:114.94px;font-size:10px;line-height:1;color:#424242;letter-spacing:-0.041px;">Labels &amp; Attributes</div><div class="t" style="left:6px;top:129.03px;font-size:10px;line-height:1;color:#424242;letter-spacing:0.007px;">Application</div><svg class="abs" style="left:9.5px;top:142.6px" width="6" height="6" viewBox="0 0 6 6"><path d="M0.3 0.8H5.7L3 5.2Z" fill="#555"/></svg><div class="t" style="left:33.6px;top:141.13px;font-size:10px;line-height:1;color:#2a2a2a;letter-spacing:-0.264px;font-weight:bold;">T03-ejemplo-1-cubos</div><div class="t" style="left:46.6px;top:153.53px;font-size:10px;line-height:1;color:#424242;letter-spacing:-0.477px;">Cube</div><div class="t" style="left:46.6px;top:165.94px;font-size:10px;line-height:1;color:#2a2a2a;letter-spacing:-0.469px;font-weight:bold;">Cube001</div><svg class="abs" style="left:20.4px;top:141.6px" width="8" height="9" viewBox="0 0 8 9"><rect x="0.3" y="0.3" width="7.4" height="8.4" fill="#ececec" stroke="#d4d4d4" stroke-width="0.5"/><path d="M1.4 7.6V4.2L3.4 3.2L6.4 3.8V7L4 8Z" fill="#2a44c8"/><path d="M1.4 4.2L3.4 3.2L6.4 3.8L4 4.8Z" fill="#5a78e8"/><path d="M3.2 3.2Q3.4 1 5.2 1Q6.8 1.2 6.6 3.4L4.6 3.8Z" fill="#e02018"/></svg><svg class="abs" style="left:31.8px;top:153.2px" width="10" height="10" viewBox="0 0 10 10"><path d="M0.8 2L3.6 0.7L9 1.5L6 2.9Z" fill="#0b1270"/><path d="M0.8 2L6 2.9V9.3L0.8 7.9Z" fill="#2a48dc"/><path d="M1.6 3L5.2 3.6V6L1.6 5.2Z" fill="#4a6cf0" opacity=".7"/><path d="M6 2.9L9 1.5V7.7L6 9.3Z" fill="#0f1a86"/><path d="M6 2.9V9.3" stroke="#e01c1c" stroke-width="0.9"/><path d="M0.8 8.1L6 9.5L9 7.9" stroke="#e01c1c" stroke-width="0.9" fill="none"/></svg><svg class="abs" style="left:31.8px;top:165.6px" width="10" height="10" viewBox="0 0 10 10"><path d="M0.8 2L3.6 0.7L9 1.5L6 2.9Z" fill="#0b1270"/><path d="M0.8 2L6 2.9V9.3L0.8 7.9Z" fill="#2a48dc"/><path d="M1.6 3L5.2 3.6V6L1.6 5.2Z" fill="#4a6cf0" opacity=".7"/><path d="M6 2.9L9 1.5V7.7L6 9.3Z" fill="#0f1a86"/><path d="M6 2.9V9.3" stroke="#e01c1c" stroke-width="0.9"/><path d="M0.8 8.1L6 9.5L9 7.9" stroke="#e01c1c" stroke-width="0.9" fill="none"/></svg><div class="abs" style="left:72px;top:260.5px;width:6px;height:1px;background:#d6d3ce"></div><div class="abs" style="left:3px;top:263px;width:143px;height:157px;background:#fff;border:1px solid #cdc9c3;"></div><div class="abs" style="left:4px;top:264px;width:141px;height:18px;background:linear-gradient(#fefefe,#f0efed);border-bottom:1px solid #d6d3ce"></div><div class="abs" style="left:70px;top:264px;width:1px;height:17px;background:#cfccc6"></div><div class="t" style="left:8px;top:268.54px;font-size:10px;line-height:1;color:#424242;letter-spacing:0.088px;">Property</div><div class="t" style="left:73.6px;top:268.54px;font-size:10px;line-height:1;color:#424242;letter-spacing:-0.167px;">Value</div><svg class="abs" style="left:2px;top:419px" width="147" height="22" viewBox="0 0 147 22"><path d="M2.5 1.5L8 19Q8.4 20.5 10 20.5H26Q27.6 20.5 28 19L33.5 1.5" fill="#fbfaf9" stroke="#8e8b85" stroke-width="0.9"/><path d="M34.5 1.5L40 17Q40.4 18.5 42 18.5H57Q58.6 18.5 59 17L64.5 1.5" fill="#ebe9e6" stroke="#8e8b85" stroke-width="0.9"/><path d="M1 21.5H146" stroke="#d2cfca" stroke-width="1"/></svg><div class="t" style="left:8.7px;top:423.74px;font-size:10px;line-height:1;color:#424242;letter-spacing:-0.074px;">View</div><div class="t" style="left:41.4px;top:423.74px;font-size:10px;line-height:1;color:#424242;letter-spacing:-0.331px;">Data</div><div class="abs" style="left:151px;top:419px;width:647px;height:21px;background:#f2f1f0;"></div><div class="abs" style="left:151px;top:419px;width:146px;height:21px;border:1px solid #d3d0cb;border-top:none;border-radius:0 0 3px 3px;box-shadow:inset -1px -1px 0 #fbfbfa, inset 1px 0 0 #fbfbfa"></div><div class="abs" style="left:153.5px;top:422px;width:141px;height:15.5px;background:#f8e5db;border:1px solid #eeae92;border-radius:2.5px"></div><svg class="abs" style="left:155.5px;top:424.5px" width="11" height="11" viewBox="0 0 11 11"><path d="M0.8 0.8H5.6V2.6H2.8V4.2H4.8V5.8H2.8V9.6H0.8Z" fill="#d8281c"/><circle cx="6.6" cy="6.4" r="2.6" fill="none" stroke="#2a3190" stroke-width="1.7"/><circle cx="6.6" cy="6.4" r="3.4" fill="none" stroke="#2a3190" stroke-width="0.9" stroke-dasharray="1.2 1.1"/></svg><div class="t" style="left:171px;top:425.34px;font-size:10px;line-height:1;color:#4a4a4a;letter-spacing:-0.234px;">T03-ejemplo-1-cubos : 1</div><svg class="abs" style="left:281px;top:425.5px" width="9" height="9" viewBox="0 0 9 9"><path d="M1.4 1.4L7.6 7.6M7.6 1.4L1.4 7.6" stroke="#6a6862" stroke-width="2.2"/></svg><div class="abs" style="left:2px;top:441px;width:796px;height:1px;background:#e6e3df"></div><div class="t" style="left:705px;top:445.54px;font-size:10px;line-height:1;color:#4a4a4a;letter-spacing:-0.315px;">36.74 x 19.58 mm</div></body></html>
